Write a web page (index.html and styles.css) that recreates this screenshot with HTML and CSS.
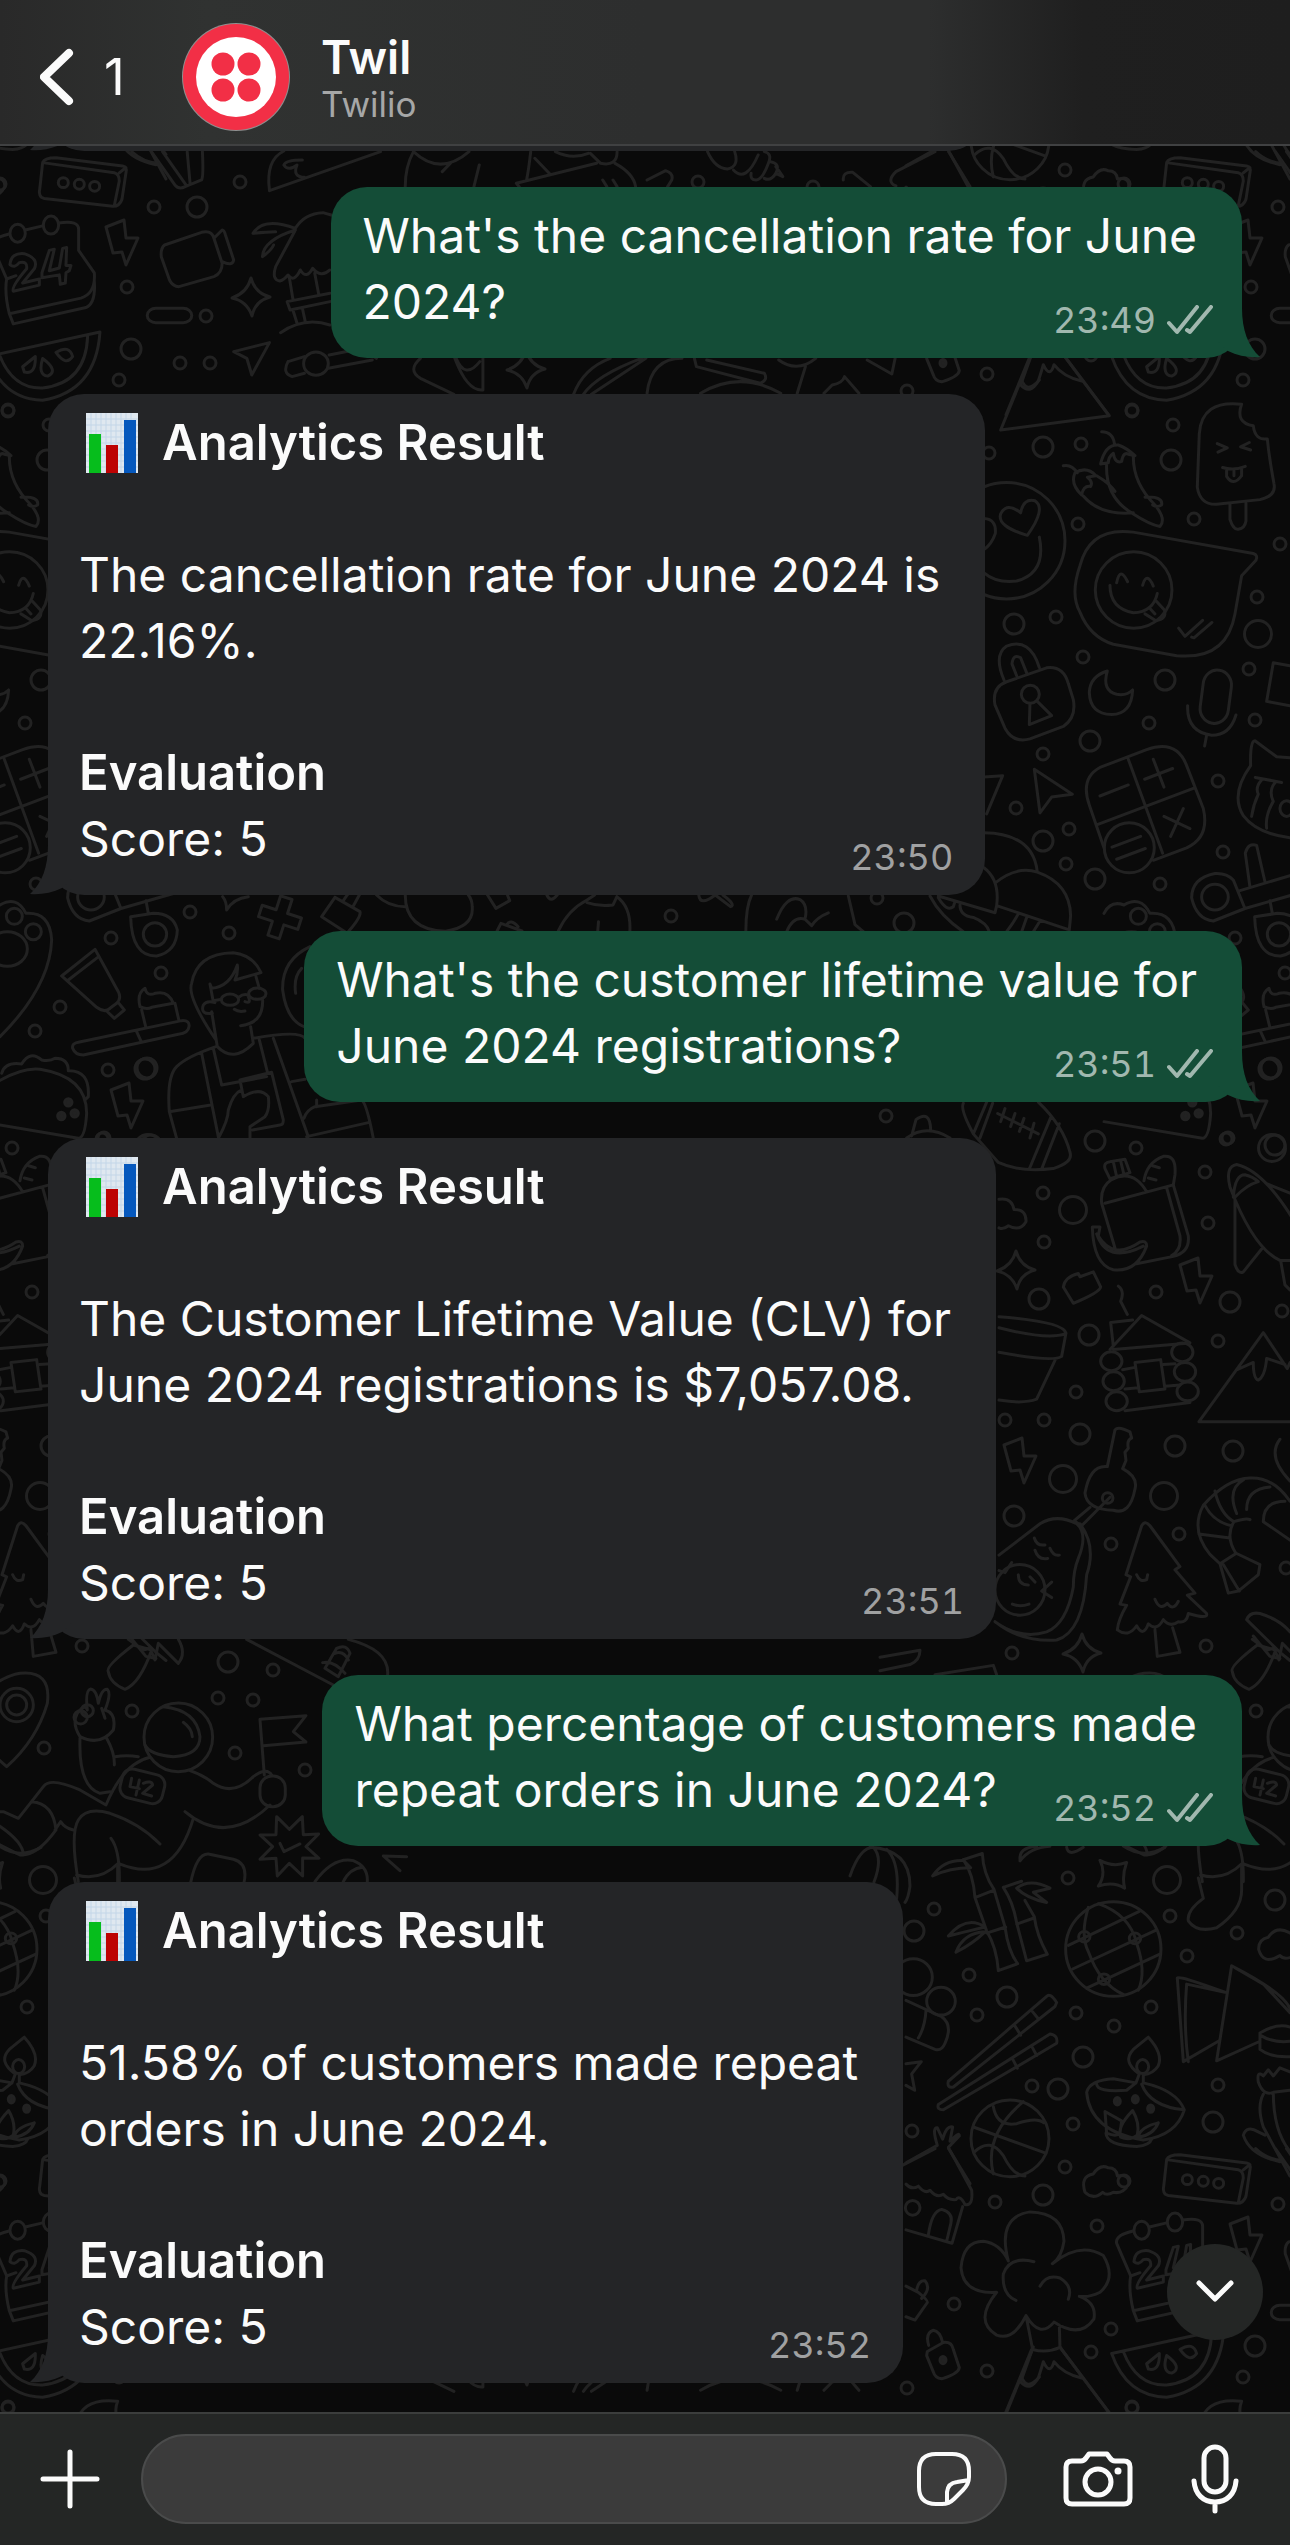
FILE: index.html
```html
<!DOCTYPE html>
<html lang="en">
<head>
<meta charset="utf-8">
<meta name="viewport" content="width=device-width, initial-scale=1">
<title>Twil</title>
<link rel="stylesheet" href="styles.css">
</head>
<body>
<svg class="defs" aria-hidden="true">
  <defs>
    <symbol id="tail" viewBox="0 0 56 50"><path d="M38 0C38 22 44 38 56 49C46 50 34 48 24 43L10 30V0Z" fill="currentColor"/></symbol>
    <symbol id="ticks" viewBox="0 0 46 30"><path d="M2 18L10 27L30 2M20 25L23 27L44 2" fill="none" stroke="currentColor" stroke-width="4" stroke-linecap="round" stroke-linejoin="round"/></symbol>
    <symbol id="chart" viewBox="0 0 52 60">
      <rect width="52" height="60" fill="#dfe8f0"/>
      <path d="M5 0V60M10 0V60M15 0V60M20 0V60M25 0V60M30 0V60M35 0V60M40 0V60M45 0V60M0 6H52M0 12H52M0 18H52M0 24H52M0 30H52M0 36H52M0 42H52M0 48H52M0 54H52" stroke="#c3d6e8" stroke-width="1"/>
      <path d="M3 21H15V60H3Z" fill="#06bd1c"/><path d="M20 32H32V60H20Z" fill="#bd0303"/><path d="M38 7H50V60H38Z" fill="#0558bd"/>
    </symbol>
  </defs>
</svg>

<div class="app">
  <header class="topbar">
    <a class="back" href="#chats" aria-label="Back to chats">
      <svg width="36" height="58" viewBox="0 0 36 58" fill="none" stroke="currentColor" stroke-width="8" stroke-linecap="round" stroke-linejoin="round"><path d="M29 5L4 29L29 53"/></svg>
      <span class="unread">1</span>
    </a>
    <svg class="avatar" width="108" height="108" viewBox="0 0 108 108" role="img" aria-label="Twilio logo">
      <circle cx="54" cy="54" r="54" fill="#8f8f8f"/><circle cx="54" cy="54" r="53" fill="#f22f46"/><circle cx="54" cy="54" r="40" fill="#fff"/>
      <g fill="#f22f46"><circle cx="41" cy="41" r="11.5"/><circle cx="67" cy="41" r="11.5"/><circle cx="41" cy="67" r="11.5"/><circle cx="67" cy="67" r="11.5"/></g>
    </svg>
    <div class="contact">
      <h1 class="contact-name">Twil</h1>
      <p class="contact-sub">Twilio</p>
    </div>
  </header>

  <main class="chat">
    <svg class="wallpaper" aria-hidden="true">
      <defs>
        <path id="bolt" d="M0 7L18 0L20 18L32 18L20 45L16 32L7 33Z"/>
        <path id="spark" d="M0 -19Q4 -4 19 0Q4 4 1 19Q-4 4 -19 1Q-4 -4 0 -19Z"/>
        <circle id="s" r="6"/><circle id="m" r="10"/><circle id="l" r="13.5"/>
        <g id="doodles">
          <!-- beach, camera and pizza -->
          <g transform="scale(.4114 .3333)">
            <path d="M400 735L490 697Q515 690 520 715L540 790Q540 820 520 830L435 860Q420 860 412 840L392 770Q390 745 400 735ZM520 715L540 690Q545 690 548 705L568 780Q565 800 540 785"/>
            <path d="M320 455Q350 490 388 490M368 455L425 555Q435 570 450 560L490 540Q495 530 492 455M395 455L452 555M455 455L462 550"/>
            <path d="M655 572Q645 480 690 453M655 572L925 455M735 480Q695 480 690 495Q700 515 722 495Q710 530 740 532"/>
            <path d="M615 700Q640 650 718 685M638 770Q640 720 718 690M638 770Q660 750 665 735M615 700Q650 695 670 695M718 685Q740 640 785 638L805 645M718 690L670 800Q660 840 680 843Q690 840 700 825Q715 850 730 810Q745 840 760 805Q780 835 802 810M703 830L712 898M765 820L775 885M698 905L802 880M698 905L705 930L802 905M712 930L722 970M735 925L742 965M682 998Q740 950 802 975"/>
            <rect x="358" y="925" width="108" height="43" rx="21"/>
            <path d="M568 1055L655 1028L612 1125L600 1075ZM700 1085Q685 1120 710 1130L740 1120M700 1085L740 1070M800 1065L870 1048Q900 1060 915 1075M798 1105L905 1080"/>
            <ellipse cx="768" cy="1091" rx="30" ry="35"/>
            <path d="M985 560Q985 500 1005 455Q1070 530 1140 455M1075 515L1095 490M1165 495L1152 560M1255 550L1450 490M1255 550L1262 560M1290 455Q1285 510 1280 540M1300 475L1335 520M1350 455Q1390 480 1430 460M1435 460L1460 490Q1500 500 1500 455M1495 490Q1540 520 1545 560M1465 540L1475 560M1490 540L1500 560"/>
          </g>
          <g transform="translate(320 355) scale(.4464 .3333)">
            <path d="M225 10Q195 45 225 70L300 118M302 10Q330 110 365 105V10M305 10Q325 75 358 20M568 118Q590 40 650 10M590 118Q620 60 720 10M608 118L730 10"/>
          </g>
          <use href="#s" x="240" y="182"/><use href="#s" x="154" y="207"/><use href="#s" x="127" y="287"/><use href="#s" x="206" y="316"/><use href="#s" x="180" y="363"/><use href="#s" x="210" y="363"/><use href="#s" x="0" y="184"/><use href="#m" x="197" y="207"/><use href="#m" x="131" y="349"/><use href="#spark" x="251" y="297"/><use href="#spark" x="526" y="369"/>
          <!-- shell, chalk and headphones -->
          <g transform="translate(645 0) scale(.4114 .3333)">
            <path d="M152 455Q170 505 200 507Q230 500 218 455M215 510Q245 550 275 465M290 455Q310 460 300 490Q285 540 270 540Q255 540 258 520M305 485Q330 490 318 520Q305 545 290 535M318 520L335 530Q325 510 318 500M5 540L50 512Q70 520 65 540L55 560M482 540Q480 515 505 517L548 560M705 455L610 515Q585 545 610 558M738 455L790 560"/>
            <path d="M5 1180Q15 1075 90 1075M120 1075L125 1100L280 1150Q300 1140 290 1120L150 1080M135 1180Q230 1110 330 1180M325 1080Q370 1120 415 1075M390 1100L370 1180M435 1180L455 1155Q480 1150 485 1130L520 1180M540 1080L600 1122L608 1075"/>
          </g>
          <use href="#s" x="698" y="182"/><use href="#s" x="813" y="187"/>
          <!-- faces, peppers, ice pop, lock, calculator, cat -->
          <g transform="translate(800 380) scale(.3333 .3571)">
            <path d="M700 -84L602 140L928 100L780 -84M665 0Q680 40 718 0"/>
            <path d="M905 145Q940 145 944 182M902 235Q915 180 955 182Q980 190 1005 212L985 208Q970 200 965 228Q945 235 940 205Q925 215 925 232ZM920 235Q915 330 1000 375Q1050 405 1080 410Q1100 390 1065 350Q1000 290 1000 215M1035 328Q1090 325 1085 350Q1070 358 1058 350M790 240Q815 235 832 260M845 322Q810 290 825 260Q860 240 888 268L862 272Q880 285 872 298Q850 295 845 322ZM850 325Q900 380 1000 372M890 268Q930 290 945 312"/>
            <path d="M1325 68Q1205 55 1198 150L1192 300Q1200 350 1250 348L1380 335Q1430 325 1422 290Q1408 220 1402 165Q1365 170 1360 128Q1305 120 1325 68ZM1290 348V390Q1300 420 1315 418Q1335 415 1338 395V345M1252 178L1282 190L1254 202M1348 175L1322 187L1352 196M1268 245Q1300 255 1336 242M1280 252V270Q1300 300 1325 268V250M1302 255V268"/>
            <ellipse cx="620" cy="450" rx="175" ry="163"/>
            <path d="M682 435Q590 410 602 375Q620 340 662 372Q670 330 705 338Q740 360 682 435ZM718 440Q740 540 650 563Q590 570 552 540M552 388Q590 390 586 430Q575 460 552 475"/>
            <path d="M1000 426Q870 410 840 520Q810 600 840 650Q870 720 940 740L1130 772Q1280 785 1305 655L1325 548L1368 505Q1375 490 1360 486Z"/>
            <ellipse cx="1001" cy="588" rx="115" ry="107"/>
            <path d="M930 575Q930 640 1000 652Q1060 650 1072 598M950 568Q960 520 983 565M1028 575Q1040 535 1060 577M1035 655L1068 674Q1100 670 1094 645L1070 620M1050 640L1065 655M1136 695L1155 718L1208 673M1175 720L1182 722L1236 679"/>
            <path d="M612 840Q580 770 620 745Q690 720 718 805M650 828L636 795Q640 765 662 778L680 820M620 845L740 806Q790 800 805 850L820 895Q830 945 790 970L690 1005Q640 1018 615 975L585 910Q575 860 620 845ZM690 905L688 965L755 940L712 900"/>
            <ellipse cx="691" cy="880" rx="27" ry="25"/>
            <path d="M922 815Q905 870 950 880Q980 885 998 868Q995 935 935 937Q870 935 868 875Q870 830 922 815Z"/>
            <rect x="1205" y="812" width="85" height="150" rx="42" transform="rotate(8 1247 887)"/>
            <path d="M1163 912Q1160 985 1235 995Q1290 995 1308 938M1220 995L1214 1025M1470 800L1420 792L1400 900L1470 912M703 1090L817 1160L755 1168L720 1212ZM552 1112L608 1108L560 1215"/>
            <path d="M1060 1345L1160 1310Q1230 1280 1210 1200L1160 1080Q1130 1005 1040 1035L900 1085Q840 1115 868 1190L912 1310M985 1062L1088 1325M892 1245L1182 1143M900 1165L985 1134M1034 1118L1118 1088M1060 1062L1092 1140M1092 1222L1170 1256M1150 1200L1112 1278M936 1308L1022 1278M950 1342L1036 1312"/>
            <ellipse cx="988" cy="1310" rx="75" ry="70"/>
            <path d="M1470 1058L1430 1055L1365 1010Q1350 1010 1352 1080Q1290 1160 1330 1220Q1370 1270 1470 1282M1366 1113L1445 1127M1385 1120Q1365 1140 1375 1160Q1360 1190 1355 1222M1425 1128Q1405 1150 1420 1180Q1395 1220 1400 1255"/>
            <ellipse cx="1460" cy="1200" rx="20" ry="22"/>
            <path d="M552 1268Q700 1270 712 1378M586 1408Q650 1360 712 1378Q810 1410 812 1500L808 1540L590 1472Q600 1400 552 1366M415 1445L585 1492L590 1472M390 1445Q420 1500 490 1545M415 1450Q440 1490 460 1475L465 1460M480 1470Q480 1500 520 1505Q560 1520 568 1545M655 1495Q640 1520 620 1545M680 1505L665 1545M720 1515L700 1545M145 1445L165 1525L190 1545M-70 1510Q-40 1440 0 1455Q25 1470 15 1510L35 1528Q50 1505 85 1492M15 1510Q-20 1500 -40 1545"/>
            <path d="M1335 1480L1300 1400Q1280 1380 1245 1382Q1175 1395 1175 1450Q1190 1510 1240 1515ZM1320 1430L1470 1388M1335 1480L1500 1436M1350 1420L1336 1325Q1345 1295 1370 1303L1395 1405"/>
            <ellipse cx="1245" cy="1448" rx="40" ry="36"/>
          </g>
          <use href="#s" x="1132" y="410"/><use href="#s" x="1173" y="425"/><use href="#s" x="1081" y="444"/><use href="#s" x="989" y="453"/><use href="#s" x="1078" y="524"/><use href="#s" x="1194" y="519"/><use href="#s" x="1280" y="544"/><use href="#s" x="1056" y="617"/><use href="#s" x="1083" y="657"/><use href="#s" x="1257" y="597"/><use href="#s" x="1249" y="669"/><use href="#s" x="1255" y="720"/><use href="#s" x="1149" y="723"/><use href="#s" x="1043" y="754"/><use href="#s" x="1016" y="808"/><use href="#s" x="1218" y="781"/><use href="#s" x="1069" y="829"/><use href="#s" x="1066" y="864"/><use href="#s" x="1160" y="884"/><use href="#s" x="1223" y="852"/><use href="#s" x="877" y="898"/><use href="#s" x="907" y="391"/><use href="#s" x="1243" y="380"/>
          <use href="#m" x="1043" y="447"/><use href="#m" x="1171" y="460"/><use href="#m" x="1014" y="624"/><use href="#m" x="1165" y="680"/><use href="#m" x="1090" y="741"/><use href="#m" x="1043" y="841"/><use href="#m" x="1095" y="879"/><use href="#m" x="904" y="923"/><use href="#l" x="1258" y="634"/>
          <!-- pumpkin and petals -->
          <g transform="translate(300 890) scale(.3827 .3333)">
            <path d="M200 15Q230 50 275 50M275 15Q275 120 380 124Q455 110 450 50Q450 30 440 15M490 15L512 55L548 32L542 15M515 123L525 100L580 123M540 105Q550 85 570 110M645 15Q655 40 672 15M675 123Q700 60 750 30L770 15M750 38Q780 50 818 45L828 20Q865 50 862 123M778 123L780 95M1042 15Q1045 50 1085 15L1125 50Q1140 45 1105 15M1165 123Q1165 50 1180 15"/>
          </g>
          <use href="#s" x="671" y="916"/>
          <!-- reader, toothbrush, tube, taco -->
          <g transform="translate(0 880) scale(.3333)">
            <circle cx="43" cy="109" r="24"/><circle cx="100" cy="155" r="24"/><ellipse cx="22" cy="207" rx="60" ry="52"/><path d="M-60 100Q-40 60 0 75Q50 45 78 100Q150 95 155 180Q150 320 0 470"/>
            <path d="M392 110Q395 230 470 228Q530 215 532 150Q520 100 460 100ZM445 100L438 62"/><circle cx="465" cy="163" r="35"/>
            <path d="M668 50Q680 65 680 90Q700 55 745 50M1005 52L1080 95Q1085 110 1045 155M1005 52L965 110L1035 155M1030 62L1045 40M1060 78L1078 45"/>
            <path d="M-18 -62H18V-18H62V18H18V62H-18V18H-62V-18H-18Z" transform="translate(840 112) rotate(18)"/>
            <path d="M285 208L185 288L290 382Q315 400 330 385L350 370Q365 355 355 335ZM293 232L205 300M320 393L343 415L373 390L355 368"/>
            <path d="M218 505Q215 490 235 487L545 422Q570 420 567 440Q565 460 535 463L250 525Q225 525 218 505ZM410 455L424 486M425 390L437 440M525 370L537 422M420 380Q410 340 435 325Q440 350 465 340Q505 330 520 370L455 382Q440 390 420 380"/>
            <path d="M648 480Q560 350 575 310Q590 220 700 218Q760 225 783 278L705 300Q715 280 712 255Q690 320 635 325L630 312L640 365M635 395L652 500Q700 550 760 490L752 440M722 437Q790 430 788 360M768 290L778 325M640 362L665 358M716 352Q730 340 745 345M703 388Q715 397 735 393M637 400Q600 405 610 375Q620 360 645 368M735 365Q755 372 745 350"/>
            <ellipse cx="690" cy="359" rx="26" ry="17"/><ellipse cx="772" cy="341" rx="26" ry="17"/>
            <path d="M530 775L508 695Q500 590 530 560Q560 530 648 500M605 520L655 770M640 505L665 615L800 590M508 695L628 676M778 480L802 575M760 475Q900 450 915 475M820 475L925 770M720 600L730 650Q780 620 805 650Q810 690 795 710L750 740V775M720 600L815 577L850 720Q850 735 840 735L758 750M655 775Q685 720 685 690Q700 640 725 630M875 605L915 598M912 715Q920 690 945 680L1085 660Q1100 670 1120 775M920 770L1105 728M950 660V680"/>
            <path d="M930 200Q845 240 848 330Q860 420 912 440M905 265Q880 290 887 340"/>
            <path d="M-60 640Q50 560 120 568Q260 590 260 700Q255 775 235 775L-60 725M5 580Q15 545 65 552Q90 510 125 540Q150 545 165 535Q205 535 205 572Q270 570 265 650L255 660"/>
            <g class="fill"><circle cx="205" cy="667" r="11"/><circle cx="184" cy="708" r="11"/><circle cx="224" cy="700" r="11"/></g>
          </g>
          <use href="#bolt" x="111" y="1083"/><use href="#s" x="190" y="912"/><use href="#s" x="111" y="938"/><use href="#s" x="229" y="933"/><use href="#s" x="161" y="973"/><use href="#s" x="60" y="1007"/><use href="#s" x="35" y="1031"/><use href="#s" x="108" y="1070"/><use href="#s" x="104" y="1138"/><use href="#m" x="147" y="1068"/><use href="#m" x="151" y="1145"/>
          <!-- football, lunch, rocket, cabin, key, avocado, pine, shrimp -->
          <g transform="translate(880 1040) scale(.3333 .4082)">
            <path d="M250 155Q240 170 280 230L355 300Q420 325 520 315Q580 300 570 275Q550 210 475 152M320 152L280 230M338 155L300 240M512 190L448 316M538 205L485 316M353 180L475 230M375 168L362 200M405 180L392 212M432 192L418 224M462 204L450 240M95 235L108 195Q150 170 152 220M80 240Q140 205 210 240"/>
            <path d="M357 390Q395 385 402 415Q440 415 438 445Q420 470 385 455Q370 465 357 460M550 605Q555 580 595 572L600 580L640 568L662 605Q660 618 580 645Z"/>
            <path d="M707 515L665 400Q660 360 695 342Q760 315 800 372M675 400L880 355L885 330Q890 280 850 285Q800 300 792 345M880 355L925 480Q930 520 880 530L770 548M860 362L900 480Q905 515 875 528M675 315Q670 300 690 298L735 292L750 325L690 340ZM700 298L710 335M722 296L732 330M818 308L838 313M805 338L828 343M637 458H660L655 480Q700 540 780 495Q800 490 800 505Q770 570 700 563Q640 550 637 458ZM650 475Q680 550 790 505M715 603Q735 615 722 640L742 672"/>
            <path d="M690 758L785 675L930 742L700 758M700 750L692 692L758 686M765 790L842 783L855 855L778 862ZM728 808L765 802M850 795L885 793M735 855L775 852M855 848L900 845M735 908L930 888"/>
            <ellipse cx="694" cy="787" rx="32" ry="23"/><ellipse cx="701" cy="836" rx="32" ry="23"/><ellipse cx="710" cy="885" rx="32" ry="23"/><ellipse cx="907" cy="765" rx="32" ry="23"/><ellipse cx="915" cy="813" rx="32" ry="23"/><ellipse cx="923" cy="861" rx="32" ry="23"/>
            <path d="M357 678Q550 690 558 718L545 775Q520 790 357 765M357 705Q500 735 556 720M525 785L470 880Q430 892 357 882"/>
            <path d="M1200 540Q1120 510 1050 360Q1035 310 1070 305Q1150 320 1240 440M1060 385Q1065 330 1095 330Q1120 335 1135 347Q1100 355 1065 385M1065 390V550Q1075 575 1090 568L1145 512M1160 352L1230 375M1202 540L1215 600L1230 612M1200 540H1230"/>
            <path d="M957 935L1150 717L1222 805L1230 790M957 935H1300M1070 808L1120 790Q1120 830 1135 833Q1155 825 1160 780L1215 795"/>
            <path d="M682 1045L705 955Q715 945 750 960L755 975Q740 980 745 1000L735 1010L738 1030L728 1050Q775 1070 765 1100Q750 1165 700 1152Q620 1150 615 1110Q630 1040 682 1045ZM630 1145L582 1178L605 1190L690 1120"/><ellipse cx="683" cy="1122" rx="16" ry="13"/>
            <path d="M357 1262L480 1185Q530 1160 590 1185Q625 1210 595 1270Q580 1300 580 1340Q560 1430 500 1450Q420 1470 345 1425M600 1185Q650 1240 620 1310Q610 1450 530 1470Q420 1475 345 1425M463 1220Q470 1240 495 1237M465 1250Q475 1275 503 1270M510 1245Q520 1265 538 1262M415 1310Q415 1335 445 1335M450 1315L465 1328M397 1382Q420 1390 447 1382M515 1328L485 1350L515 1366M357 1300L375 1305L395 1280"/><ellipse cx="420" cy="1347" rx="75" ry="62"/>
            <path d="M738 1310L785 1190Q795 1175 810 1190L900 1290L885 1298L945 1355L922 1360L980 1405Q985 1420 925 1405Q920 1430 895 1425Q870 1440 850 1420Q830 1450 805 1430Q790 1465 770 1435Q745 1465 712 1445Q715 1420 740 1385L720 1382L752 1315ZM825 1445L832 1510L900 1500L878 1440M770 1310Q780 1330 800 1322L803 1310M825 1370Q840 1400 862 1380Q880 1400 895 1375"/>
            <path d="M1230 1130Q1180 1070 1110 1073Q1040 1075 970 1140Q930 1200 990 1260L1020 1283L1068 1258Q1035 1215 1062 1180Q1100 1170 1110 1175M1005 1105Q1020 1160 1062 1180M1070 1160Q1040 1100 1090 1078M1100 1150Q1100 1100 1170 1095M1150 1180Q1150 1130 1215 1130M1150 1180L1230 1225M975 1140Q1000 1180 1055 1190M957 1210L1050 1220M1020 1283L1045 1355L1075 1350L1135 1310L1140 1285L1070 1258M1030 1285L1078 1350M1200 978Q1160 1020 1230 1080"/>
            <path d="M1230 1450Q1200 1420 1140 1405Q1110 1400 1100 1420L1200 1500L1230 1520M1120 1460L1170 1510L1200 1515M0 1512L120 1495Q120 1520 90 1530L0 1545M165 1555L340 1532L350 1555"/>
          </g>
          <use href="#bolt" x="1180" y="1258"/><use href="#bolt" x="1004" y="1438"/><use href="#spark" x="1016" y="1270"/><use href="#spark" x="1082" y="1653"/>
          <use href="#s" x="886" y="1116"/><use href="#s" x="1136" y="1148"/><use href="#s" x="1226" y="1139"/><use href="#s" x="1043" y="1193"/><use href="#s" x="1205" y="1172"/><use href="#s" x="1044" y="1242"/><use href="#s" x="1208" y="1223"/><use href="#s" x="1156" y="1292"/><use href="#s" x="1282" y="1311"/><use href="#s" x="1218" y="1341"/><use href="#s" x="1076" y="1392"/><use href="#s" x="1005" y="1420"/><use href="#s" x="1044" y="1420"/><use href="#s" x="1111" y="1544"/><use href="#s" x="1179" y="1534"/><use href="#s" x="1286" y="1568"/><use href="#s" x="1012" y="1653"/>
          <use href="#m" x="1095" y="1141"/><use href="#m" x="1269" y="1069"/><use href="#m" x="1039" y="1299"/><use href="#m" x="1089" y="1335"/><use href="#m" x="1230" y="1302"/><use href="#m" x="1080" y="1434"/><use href="#m" x="1175" y="1446"/><use href="#m" x="1233" y="1451"/><use href="#m" x="1014" y="1516"/><use href="#l" x="1073" y="1210"/><use href="#l" x="1272" y="1148"/><use href="#l" x="1063" y="1479"/><use href="#l" x="1164" y="1496"/>
          <!-- astronaut -->
          <g transform="translate(0 1600) scale(.3333)">
            <path d="M325 215Q315 200 400 135L455 150Q420 250 375 268Q330 250 325 215M385 118L430 150L450 145L465 180L475 130L535 190Q560 160 535 118"/>
            <circle cx="50" cy="315" r="50"/><circle cx="50" cy="315" r="30"/><path d="M-60 290Q0 230 60 220Q155 210 142 310Q110 420 20 500L-60 430"/>
            <path d="M240 410Q215 370 232 340Q255 310 262 330Q255 270 272 267Q290 270 295 310Q305 265 322 268Q335 280 315 330Q350 340 340 390Q300 440 240 410M305 325L315 355M240 415Q235 560 300 580L330 575M320 415Q345 460 343 495"/><circle cx="242" cy="352" r="20"/><circle cx="262" cy="332" r="18"/>
            <circle cx="535" cy="412" r="103"/><path d="M435 435Q450 465 520 470Q600 465 600 410Q590 330 490 320M550 367Q575 385 577 410"/>
            <path d="M345 470Q380 465 415 470M450 472Q370 490 318 615L240 570Q150 530 130 560L55 655L10 635H-30M95 605Q160 610 168 690Q110 770 60 765L-30 720M-30 660Q70 720 70 765M165 690L182 665Q195 685 220 690M235 845Q210 700 235 660Q260 620 330 640Q420 670 480 732M333 715Q360 750 358 845M230 825Q300 845 355 790Q520 860 580 655M555 635Q680 740 810 615M570 512Q610 525 640 550Q700 590 760 530Q800 500 815 525"/>
            <rect x="362" y="515" width="130" height="88" rx="30" transform="rotate(14 427 560)"/><path d="M395 535L390 560L418 566M418 540L408 585M430 550Q455 540 458 555L428 580L455 588"/>
            <rect x="780" y="528" width="76" height="92" rx="36"/><path d="M793 525L780 358L918 347L880 395L918 426L790 437"/>
            <path d="M975 205L1010 145Q1040 130 1050 160L1015 230ZM968 188Q1000 180 1035 220M1005 160Q1030 150 1045 180M740 118L1000 255M1045 118Q1170 150 1163 225"/>
            <path d="M830 650L868 688L907 650L910 704L956 702L918 740L957 775L908 774L908 828L868 790L832 828L828 775L780 778L818 740L780 705L828 704ZM840 730L852 755L900 732"/>
            <path d="M572 848Q590 760 625 762L700 778Q745 790 732 848M945 845Q1000 770 1060 782Q1105 800 1102 845M1030 845Q1050 805 1088 802M1220 770L1150 768L1200 812"/>
          </g>
          <use href="#s" x="82" y="1646"/><use href="#s" x="273" y="1670"/><use href="#s" x="218" y="1698"/><use href="#s" x="253" y="1700"/><use href="#s" x="132" y="1711"/><use href="#s" x="44" y="1748"/><use href="#s" x="235" y="1753"/><use href="#s" x="305" y="1770"/><use href="#m" x="228" y="1662"/>
          <!-- bamboo, globe, diya, basketball, calendar, watermelon -->
          <g transform="translate(850 1780) scale(.3333 .4082)">
            <path d="M750 197Q790 215 830 202Q815 235 824 265Q790 248 745 260Q770 230 750 197ZM0 235Q30 165 70 165Q100 190 72 250M110 170Q150 200 140 290M60 165Q180 170 180 260Q175 290 165 300"/>
            <path d="M340 195L397 180Q400 230 432 268L465 360Q475 420 503 450L445 467Q440 410 410 370L375 288Q370 230 340 195M375 288L432 270M410 375L467 360M248 235Q280 195 340 197L362 215Q300 215 248 235M295 382Q350 330 405 360L345 372ZM318 422Q340 375 405 372Q370 400 318 422M460 263L515 248M460 263Q490 300 500 350L530 443L592 427Q560 380 553 335L525 295M500 353L552 338M500 265Q540 240 600 265L550 275L590 300Q530 290 500 265"/>
            <ellipse cx="790" cy="414" rx="143" ry="116"/><path d="M655 405L868 322M668 463L920 367M710 510L928 427M715 312Q690 380 715 420Q750 500 820 525M745 303Q840 330 860 400Q890 470 865 515"/><ellipse cx="703" cy="384" rx="17" ry="13"/><ellipse cx="855" cy="388" rx="17" ry="13"/><ellipse cx="762" cy="488" rx="17" ry="13"/>
            <path d="M510 198Q505 165 560 162M510 198Q540 165 600 162M650 165Q655 190 700 165M820 162Q880 195 945 165"/>
            <path d="M1045 240L1060 290Q1010 320 1015 345Q1040 375 1100 362Q1175 320 1175 270V210M1320 435Q1300 440 1290 430Q1240 455 1226 415Q1225 390 1255 385Q1280 355 1320 375"/>
            <path d="M982 485L1000 690L1105 640M982 485Q985 478 1125 520L1010 500Q1000 600 1015 690M1145 455L1100 688L1230 640M1145 455Q1300 520 1320 560M1155 460L1240 500L1320 570M1230 620Q1280 595 1320 605M1230 620V660Q1260 680 1320 678M1230 625Q1270 645 1320 640"/>
            <path d="M1225 740Q1220 710 1240 725L1255 710L1270 725L1290 705L1320 715M1225 740Q1240 775 1270 765L1320 760M1320 970L1240 850Q1220 800 1240 770M1290 935Q1200 920 1180 870Q1190 845 1225 862L1245 870M1270 765Q1270 860 1320 910"/>
            <path d="M295 738L590 530Q600 520 620 545L615 555L310 752Q290 755 295 738M493 600L512 625M545 565L565 585M265 795L600 622Q625 625 620 645L280 808Q260 808 265 795M487 682L502 706M545 652L560 675"/>
            <ellipse cx="190" cy="483" rx="57" ry="45"/><ellipse cx="273" cy="542" rx="43" ry="34"/><path d="M168 540L275 580Q310 600 285 645Q275 665 255 660L168 630M228 565Q225 605 205 632M168 695L214 690L185 720L194 760L168 748"/>
            <ellipse cx="480" cy="878" rx="117" ry="94"/><path d="M370 850L583 913M520 788Q400 870 430 965M430 800Q440 850 500 842Q560 825 582 840M375 910Q420 875 460 920Q490 970 525 970"/>
            <path d="M710 765Q720 735 790 732L858 742L868 720Q815 690 850 660L895 630Q940 670 925 700Q910 720 880 722V742Q980 760 1003 808Q980 870 880 882Q720 860 710 765ZM740 745Q740 765 830 760L858 742M875 745Q900 800 1003 808M768 865Q770 895 860 898Q900 895 905 880M765 812L770 865Q800 875 810 865L815 835ZM848 810Q800 850 812 875Q840 885 862 870Q870 840 848 810ZM925 840Q870 850 865 875Q910 870 925 840"/><ellipse cx="878" cy="702" rx="18" ry="17"/>
            <g class="fill"><circle cx="802" cy="787" r="9"/><circle cx="856" cy="782" r="9"/><circle cx="902" cy="805" r="9"/><circle cx="279" cy="1421" r="9"/></g>
            <path d="M168 938L262 895Q245 850 262 852L278 880Q290 845 308 850L300 885Q330 860 328 872L295 900L365 1005Q370 1045 345 1040Q330 1015 318 1028Q295 1030 280 1015Q260 1025 240 1005Q225 1015 205 995Q185 1005 168 990M338 1045L306 1135L168 1102M235 1115Q245 1055 275 1052Q310 1060 303 1085L290 1130"/><ellipse cx="188" cy="1048" rx="22" ry="18"/>
            <path d="M705 1010Q690 970 730 965Q750 940 775 950Q800 950 802 970Q840 965 836 990Q820 1015 790 1010Q770 1020 758 1010Q730 1030 705 1010Z"/>
            <path d="M950 930Q955 918 990 918L1190 938Q1205 940 1200 955L1188 1020Q1180 1038 1160 1037L955 1018Q935 1015 942 990ZM950 930L1165 955Q1180 958 1180 975L1165 1035M1180 955L1200 942"/><ellipse cx="1012" cy="979" rx="15" ry="12"/><ellipse cx="1060" cy="983" rx="15" ry="12"/><ellipse cx="1106" cy="988" rx="15" ry="12"/>
            <path d="M850 1105Q795 1115 800 1135L842 1215Q835 1250 850 1300L1065 1262Q1110 1250 1105 1200L1058 1145V1095Q1060 1070 998 1078M898 1095L950 1085M842 1215L870 1207M850 1300L862 1325L1080 1285Q1110 1275 1105 1220"/><ellipse cx="875" cy="1103" rx="23" ry="22"/><ellipse cx="975" cy="1083" rx="23" ry="22"/>
            <path d="M852 1180Q855 1150 895 1153Q940 1165 925 1190L890 1225L940 1215V1230L862 1245Q855 1235 902 1190Q905 1170 880 1175Q865 1190 852 1180ZM948 1200L970 1145L985 1142L970 1195L1000 1188L1010 1140L1022 1138L1020 1182H1035L1030 1195L1020 1200L1018 1225L1003 1228L1000 1205L948 1212Z"/>
            <path d="M475 1178Q440 1070 540 1058Q640 1060 642 1130Q635 1170 607 1185Q690 1130 760 1165Q800 1220 750 1255Q720 1268 688 1265Q740 1280 732 1320Q690 1370 612 1328Q570 1370 528 1312Q490 1375 440 1360Q370 1325 440 1255Q340 1260 333 1195Q340 1130 400 1130Q450 1135 475 1178M552 1180Q480 1165 460 1210Q455 1260 498 1275M570 1240Q590 1210 630 1220Q670 1240 655 1272M528 1312L548 1395Q590 1405 630 1390L628 1335M545 1395L468 1548M630 1390L775 1548M545 1400L512 1475Q540 1500 565 1465Q575 1440 580 1425Q600 1460 612 1425Q640 1455 695 1465"/>
            <path d="M236 1385Q225 1355 250 1348Q270 1350 278 1378M232 1400L280 1378Q305 1375 310 1395L328 1440Q325 1455 275 1467Q255 1465 250 1450L230 1410ZM168 1240L205 1255Q235 1275 232 1280L195 1323L168 1315M200 1250Q205 1225 225 1227Q245 1245 215 1270"/>
            <path d="M785 1405Q830 1510 950 1512Q1110 1490 1122 1345ZM820 1400Q860 1485 950 1482Q1080 1470 1085 1355M890 1430L928 1405Q930 1450 895 1443ZM950 1410Q935 1450 965 1453Q1000 1440 950 1410M990 1395Q1030 1375 1040 1405Q1020 1430 990 1395"/>
          </g>
          <use href="#bolt" x="1230" y="2217"/>
          <use href="#s" x="1068" y="1878"/><use href="#s" x="934" y="1909"/><use href="#s" x="1170" y="1916"/><use href="#s" x="1237" y="1933"/><use href="#s" x="1187" y="1956"/><use href="#s" x="969" y="1975"/><use href="#s" x="977" y="2015"/><use href="#s" x="1076" y="2013"/><use href="#s" x="1114" y="2026"/><use href="#s" x="1151" y="2007"/><use href="#s" x="1032" y="2086"/><use href="#s" x="1073" y="2124"/><use href="#s" x="1218" y="2085"/><use href="#s" x="912" y="2131"/><use href="#s" x="1065" y="2167"/><use href="#s" x="995" y="2202"/><use href="#s" x="1097" y="2226"/><use href="#s" x="954" y="2304"/><use href="#s" x="1111" y="2329"/><use href="#s" x="1091" y="2352"/><use href="#s" x="987" y="2371"/><use href="#s" x="1132" y="2408"/>
          <use href="#m" x="914" y="1931"/><use href="#m" x="1275" y="1900"/><use href="#m" x="1007" y="1997"/><use href="#m" x="1083" y="2057"/><use href="#m" x="1058" y="2089"/><use href="#m" x="1043" y="2195"/><use href="#m" x="1213" y="2122"/><use href="#l" x="1167" y="1880"/>
        </g>
      </defs>
      <g class="ink">
        <use href="#doodles"/><use href="#doodles" x="-1124"/><use href="#doodles" x="1124"/>
        <use href="#doodles" y="-1997"/><use href="#doodles" x="-1124" y="-1997"/><use href="#doodles" x="1124" y="-1997"/>
        <use href="#doodles" y="1997"/><use href="#doodles" x="-1124" y="1997"/><use href="#doodles" x="1124" y="1997"/>
      </g>
    </svg>

    <div class="messages">
      <div class="bubble in earlier"><svg class="tail" aria-hidden="true"><use href="#tail"/></svg></div>

      <article class="bubble out">
        <p class="text">What's the cancellation rate for June<br>2024?</p>
        <div class="meta"><time>23:49</time><svg class="ticks" role="img" aria-label="Delivered"><use href="#ticks"/></svg></div>
        <svg class="tail" aria-hidden="true"><use href="#tail"/></svg>
      </article>

      <article class="bubble in">
        <div class="text">
          <h2 class="title"><svg class="chart" aria-hidden="true"><use href="#chart"/></svg>Analytics Result</h2>
          <p class="answer">The cancellation rate for June 2024 is<br>22.16%.</p>
          <h3 class="title">Evaluation</h3>
          <p>Score: 5</p>
        </div>
        <div class="meta"><time>23:50</time></div>
        <svg class="tail" aria-hidden="true"><use href="#tail"/></svg>
      </article>

      <article class="bubble out">
        <p class="text">What's the customer lifetime value for<br>June 2024 registrations?</p>
        <div class="meta"><time>23:51</time><svg class="ticks" role="img" aria-label="Delivered"><use href="#ticks"/></svg></div>
        <svg class="tail" aria-hidden="true"><use href="#tail"/></svg>
      </article>

      <article class="bubble in">
        <div class="text">
          <h2 class="title"><svg class="chart" aria-hidden="true"><use href="#chart"/></svg>Analytics Result</h2>
          <p class="answer">The Customer Lifetime Value (CLV) for<br>June 2024 registrations is $7,057.08.</p>
          <h3 class="title">Evaluation</h3>
          <p>Score: 5</p>
        </div>
        <div class="meta"><time>23:51</time></div>
        <svg class="tail" aria-hidden="true"><use href="#tail"/></svg>
      </article>

      <article class="bubble out">
        <p class="text">What percentage of customers made<br>repeat orders in June 2024?</p>
        <div class="meta"><time>23:52</time><svg class="ticks" role="img" aria-label="Delivered"><use href="#ticks"/></svg></div>
        <svg class="tail" aria-hidden="true"><use href="#tail"/></svg>
      </article>

      <article class="bubble in">
        <div class="text">
          <h2 class="title"><svg class="chart" aria-hidden="true"><use href="#chart"/></svg>Analytics Result</h2>
          <p class="answer">51.58% of customers made repeat<br>orders in June 2024.</p>
          <h3 class="title">Evaluation</h3>
          <p>Score: 5</p>
        </div>
        <div class="meta"><time>23:52</time></div>
        <svg class="tail" aria-hidden="true"><use href="#tail"/></svg>
      </article>
    </div>

    <button class="jump" type="button" aria-label="Scroll to latest">
      <svg width="40" height="24" viewBox="0 0 40 24" fill="none" stroke="currentColor" stroke-width="5" stroke-linecap="round" stroke-linejoin="round"><path d="M4 3L20 19L36 3"/></svg>
    </button>
  </main>

  <footer class="composer">
    <button class="icon" type="button" aria-label="Attach">
      <svg width="60" height="60" viewBox="0 0 60 60" fill="none" stroke="currentColor" stroke-width="5" stroke-linecap="round"><path d="M30 3V57M3 30H57"/></svg>
    </button>
    <div class="field">
      <input class="message-input" type="text" aria-label="Message">
      <button class="icon" type="button" aria-label="Stickers">
        <svg width="56" height="56" viewBox="0 0 56 56" fill="none" stroke="currentColor" stroke-width="4" stroke-linejoin="round"><path d="M20 3H36Q53 3 53 20V26C53 32 50 36 47 39L38 48C35 51 31 53 26 53H20Q3 53 3 36V20Q3 3 20 3ZM53 29L41 31Q32 32 31 41V52"/></svg>
      </button>
    </div>
    <button class="icon" type="button" aria-label="Camera">
      <svg width="70" height="56" viewBox="0 0 70 56" fill="none" stroke="currentColor" stroke-width="5" stroke-linejoin="round"><path d="M9 10H18Q21 10 23 7L26 3H44L47 7Q49 10 52 10H61Q67 10 67 16V47Q67 53 61 53H9Q3 53 3 47V16Q3 10 9 10Z"/><circle cx="35" cy="31" r="13"/><circle cx="55" cy="20" r="3.5" fill="currentColor" stroke="none"/></svg>
    </button>
    <button class="icon" type="button" aria-label="Record voice message">
      <svg width="48" height="70" viewBox="0 0 48 70" fill="none" stroke="currentColor" stroke-width="5" stroke-linecap="round"><rect x="13" y="3" width="22" height="45" rx="11"/><path d="M3 37C4 50 12 58 24 58S44 50 45 37M24 58V67"/></svg>
    </button>
  </footer>
</div>
</body>
</html>
```
FILE: styles.css
```css
* { box-sizing: border-box; }

body {
  margin: 0;
  background: #0a0a0a;
  color: #fbfbfb;
  font-family: Inter, "Liberation Sans", sans-serif;
  font-size: 48px;
  line-height: 66px;
}

h1, h2, h3, p { margin: 0; font-size: inherit; font-weight: inherit; }
button { padding: 0; border: 0; background: none; color: inherit; font: inherit; }
svg { display: block; flex: none; }
.defs { position: absolute; width: 0; height: 0; }

.app { display: flex; flex-direction: column; min-height: 100vh; }

/* Header */
.topbar {
  position: relative;
  z-index: 1;
  display: flex;
  align-items: center;
  height: 146px;
  padding: 10px 40px 0;
  border-bottom: 2px solid #404142;
  background: linear-gradient(90deg, #292929, #303231 16%, #2d2e2e 50%, #2d2e2e 72%, #1f1f1f 84%, #1e1e1e);
}
.back {
  display: flex;
  align-items: center;
  gap: 28px;
  width: 142px;
  color: inherit;
  text-decoration: none;
}
.unread { font-size: 51px; }
.contact { margin-left: 31px; padding-bottom: 2px; }
.contact-name { font-size: 46px; font-weight: 600; line-height: 56px; }
.contact-sub { color: #a6a7a7; font-size: 35px; line-height: 38px; }

/* Conversation */
.chat { position: relative; flex: 1; overflow: hidden; }
.wallpaper { position: absolute; top: -146px; left: 0; width: 100%; height: calc(100% + 146px); }
.ink { fill: none; stroke: #222; stroke-width: 3px; stroke-linecap: round; stroke-linejoin: round; }
.ink *, #doodles * { vector-effect: non-scaling-stroke; }
.fill { fill: #222; }

.messages {
  position: relative;
  display: flex;
  flex-direction: column;
  gap: 36px;
  padding: 0 48px 29px;
}
.bubble {
  position: relative;
  display: grid;
  padding: 16px 45px 23px 32px;
  border-radius: 36px;
}
.text, .meta { grid-area: 1 / 1; }
.in { align-self: flex-start; padding-left: 31px; background: #242527; color: #242527; }
.out { align-self: flex-end; background: #144d37; color: #144d37; }
.text { color: #fbfbfb; }
.earlier { width: 936px; height: 100px; margin-top: -95px; }
.title { display: flex; align-items: center; font-size: 49px; font-weight: 600; }
.chart { width: 52px; height: 60px; margin: 0 24px 0 7px; }
.answer { margin: 66px 0; }
.meta {
  display: flex;
  align-items: center;
  place-self: end;
  gap: 11px;
  margin: 0 -13px -3px 0;
  color: #a0a1a2;
  font-size: 36px;
  font-variant-numeric: tabular-nums;
  line-height: 36px;
}
.out .meta { margin-right: -16px; color: #a1b8af; }
.ticks { width: 46px; height: 30px; }
.tail { position: absolute; bottom: 0; width: 56px; height: 50px; }
.out .tail { right: -18px; }
.in .tail { left: -18px; transform: scaleX(-1); }

.jump {
  position: absolute;
  right: 27px;
  bottom: 72px;
  display: grid;
  place-items: center;
  width: 96px;
  height: 96px;
  border-radius: 50%;
  background: #242625;
}

/* Composer */
.composer {
  display: flex;
  align-items: center;
  padding: 20px 51px 21px 40px;
  border-top: 2px solid #3b3d3c;
  background: #242625;
}
.field {
  display: flex;
  align-items: center;
  flex: 1;
  min-width: 0;
  height: 90px;
  margin: 0 56px 0 41px;
  padding: 0 33px 0 32px;
  border: 2px solid #4a4b4b;
  border-radius: 45px;
  background: #3b3b3b;
}
.message-input {
  flex: 1;
  width: 100%;
  min-width: 0;
  border: 0;
  outline: 0;
  background: none;
  color: inherit;
  font: inherit;
}
.icon + .icon { margin-left: 58px; }
```
